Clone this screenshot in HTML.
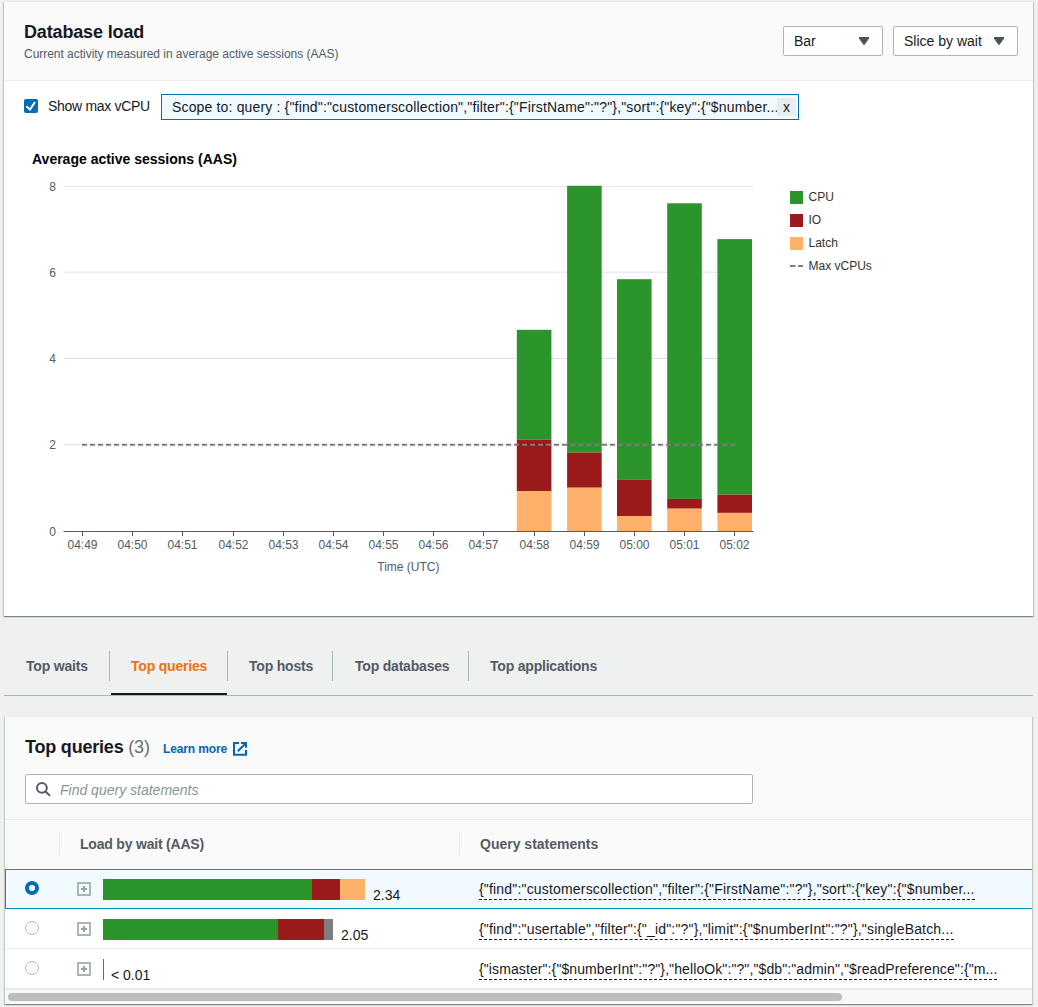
<!DOCTYPE html>
<html><head><meta charset="utf-8">
<style>
*{box-sizing:border-box;margin:0;padding:0}
html,body{width:1038px;height:1007px;overflow:hidden;background:#eff1f1;font-family:"Liberation Sans",sans-serif;color:#16191f;position:relative}
.a{position:absolute;white-space:nowrap}
#p1{position:absolute;left:4px;top:1px;width:1029px;height:615px;background:#fff;border-top:1px solid #eaeded;box-shadow:0 1px 1px 0 rgba(0,28,36,.3),1px 1px 1px 0 rgba(0,28,36,.15),-1px 1px 1px 0 rgba(0,28,36,.15)}
#p1h{position:absolute;left:4px;top:2px;width:1029px;height:79px;background:#fafafa;border-bottom:1px solid #eaeded}
.dd{position:absolute;top:26px;height:30px;background:#fff;border:1px solid #aab7b8;border-radius:2px;font-size:14px;color:#16191f}
.dd span{position:absolute;top:6px}
.tri{position:absolute;top:10px;width:10px;height:8px}
#cb{position:absolute;left:24px;top:99px;width:14px;height:14px;background:#006cb6;border-radius:2px}
#scope{position:absolute;left:161px;top:94px;width:638px;height:26px;background:#f1faff;border:1px solid #0073bb;font-size:14px}
#xbtn{position:absolute;left:615px;top:3px;width:19px;height:18px;background:#eaeded;font-size:14px;text-align:center;line-height:19px}
.tab{position:absolute;top:658px;letter-spacing:-0.2px;font-size:14px;font-weight:bold;color:#545b64}
.sep{position:absolute;top:651px;width:1px;height:30px;background:#aab7b8}
#tabline{position:absolute;left:4px;top:695px;width:1029px;height:1px;background:#aab7b8}
#tabul{position:absolute;left:111px;top:693px;width:116px;height:2px;background:#16191f}
#p2{position:absolute;left:5px;top:716px;width:1027px;height:288px;background:#fff;border-top:1px solid #eaeded;box-shadow:0 1px 1px 0 rgba(0,28,36,.3),1px 1px 1px 0 rgba(0,28,36,.15),-1px 1px 1px 0 rgba(0,28,36,.15)}
#p2h{position:absolute;left:0;top:0;width:1027px;height:103px;background:#fafafa;border-bottom:1px solid #eaeded}
#search{position:absolute;left:25px;top:774px;width:728px;height:30px;background:#fff;border:1px solid #aab7b8;border-radius:2px}
#thead{position:absolute;left:5px;top:820px;width:1027px;height:49px;background:#fafafa}
.hsep{position:absolute;top:832px;width:1px;height:23px;background:#eaeded}
.th{position:absolute;top:836px;letter-spacing:-0.2px;font-size:14px;font-weight:bold;color:#545b64}
.row{position:absolute;left:5px;width:1027px;height:40px;background:#fff;border-bottom:1px solid #eaeded}
.radio{position:absolute;left:25px;width:14px;height:14px;border-radius:50%;border:1px solid #aab7b8;background:#fff}
.exp{position:absolute;left:77px;width:14px;height:14px;border:2px solid #aab7b8}
.exp:before{content:"";position:absolute;left:2px;top:4px;width:6px;height:2px;background:#95a1a2}.exp:after{content:"";position:absolute;left:4px;top:2px;width:2px;height:6px;background:#95a1a2}
.q{position:absolute;left:479px;font-size:14px;color:#16191f;border-bottom:1px dashed #16191f;line-height:19px;letter-spacing:0.18px}
.val{position:absolute;font-size:14px;margin-top:1px;color:#16191f}
.seg{position:absolute;height:21px}
</style></head>
<body>
<div id="p1"></div>
<div id="p1h"></div>
<div id="t1" class="a" style="left:24px;top:22px;letter-spacing:-0.15px;font-size:18px;font-weight:bold;">Database load</div>
<div id="t2" class="a" style="left:24px;top:47px;letter-spacing:-0.03px;font-size:12px;color:#545b64">Current activity measured in average active sessions (AAS)</div>
<div class="dd" style="left:783px;width:100px"><span id="bar" style="left:10px">Bar</span><div class="tri" style="left:75px"><svg width="10" height="8" style="display:block"><path d="M0 0 H10 V1.6 L5.6 7.8 H4.4 L0 1.6 Z" fill="#4b535c"/></svg></div></div>
<div class="dd" style="left:893px;width:125px"><span id="slice" style="left:10px">Slice by wait</span><div class="tri" style="left:100px"><svg width="10" height="8" style="display:block"><path d="M0 0 H10 V1.6 L5.6 7.8 H4.4 L0 1.6 Z" fill="#4b535c"/></svg></div></div>

<div id="cb"><svg width="14" height="14" style="position:absolute;left:0;top:0"><path d="M2.3 7.3 L6 10.5 L11 3" stroke="#fff" stroke-width="2" fill="none"/></svg></div>
<div id="smv" class="a" style="left:48px;top:98px;font-size:14px;letter-spacing:-0.3px">Show max vCPU</div>
<div id="scope"><span id="scopetxt" class="a" style="left:10px;top:4px;letter-spacing:0.16px">Scope to: query : {"find":"customerscollection","filter":{"FirstName":"?"},"sort":{"key":{"$number...</span><div id="xbtn">x</div></div>

<svg width="1038" height="620" style="position:absolute;left:0;top:0">
<text id="ctitle" x="32" y="164" font-family="Liberation Sans" font-weight="bold" font-size="14" fill="#000">Average active sessions (AAS)</text>
<line x1="64" x2="753" y1="186.3" y2="186.3" stroke="#dde3ee" stroke-width="1"/>
<text x="56" y="190.6" text-anchor="end" font-family="Liberation Sans" font-size="12" fill="#545b64">8</text>
<line x1="64" x2="753" y1="272.2" y2="272.2" stroke="#dde3ee" stroke-width="1"/>
<text x="56" y="276.5" text-anchor="end" font-family="Liberation Sans" font-size="12" fill="#545b64">6</text>
<line x1="64" x2="753" y1="358.5" y2="358.5" stroke="#dde3ee" stroke-width="1"/>
<text x="56" y="362.8" text-anchor="end" font-family="Liberation Sans" font-size="12" fill="#545b64">4</text>
<line x1="64" x2="753" y1="444.75" y2="444.75" stroke="#dde3ee" stroke-width="1"/>
<text x="56" y="449.1" text-anchor="end" font-family="Liberation Sans" font-size="12" fill="#545b64">2</text>
<text x="56" y="535.6" text-anchor="end" font-family="Liberation Sans" font-size="12" fill="#545b64">0</text>
<rect x="516.8" y="329.8" width="34.6" height="109.9" fill="#2b942b"/>
<rect x="516.8" y="439.7" width="34.6" height="51.3" fill="#9b1b1c"/>
<rect x="516.8" y="491.0" width="34.6" height="40.3" fill="#ffb06b"/>
<rect x="567.1" y="185.8" width="34.6" height="266.7" fill="#2b942b"/>
<rect x="567.1" y="452.5" width="34.6" height="35.2" fill="#9b1b1c"/>
<rect x="567.1" y="487.7" width="34.6" height="43.6" fill="#ffb06b"/>
<rect x="617.0" y="279.2" width="34.6" height="200.2" fill="#2b942b"/>
<rect x="617.0" y="479.4" width="34.6" height="36.6" fill="#9b1b1c"/>
<rect x="617.0" y="516.0" width="34.6" height="15.3" fill="#ffb06b"/>
<rect x="667.2" y="203.3" width="34.6" height="295.6" fill="#2b942b"/>
<rect x="667.2" y="498.9" width="34.6" height="9.8" fill="#9b1b1c"/>
<rect x="667.2" y="508.7" width="34.6" height="22.6" fill="#ffb06b"/>
<rect x="717.4" y="239.1" width="34.6" height="255.5" fill="#2b942b"/>
<rect x="717.4" y="494.6" width="34.6" height="18.3" fill="#9b1b1c"/>
<rect x="717.4" y="512.9" width="34.6" height="18.4" fill="#ffb06b"/>
<line x1="82" x2="735" y1="444.8" y2="444.8" stroke="#7d7d7d" stroke-width="2" stroke-dasharray="5 3"/>
<line x1="63.5" x2="753.5" y1="531.5" y2="531.5" stroke="#545b64" stroke-width="1"/>
<line x1="82.5" x2="82.5" y1="531.5" y2="536" stroke="#545b64" stroke-width="1"/>
<text x="82.5" y="549.2" text-anchor="middle" font-family="Liberation Sans" font-size="12" fill="#545b64">04:49</text>
<line x1="132.5" x2="132.5" y1="531.5" y2="536" stroke="#545b64" stroke-width="1"/>
<text x="132.5" y="549.2" text-anchor="middle" font-family="Liberation Sans" font-size="12" fill="#545b64">04:50</text>
<line x1="182.5" x2="182.5" y1="531.5" y2="536" stroke="#545b64" stroke-width="1"/>
<text x="182.5" y="549.2" text-anchor="middle" font-family="Liberation Sans" font-size="12" fill="#545b64">04:51</text>
<line x1="233.5" x2="233.5" y1="531.5" y2="536" stroke="#545b64" stroke-width="1"/>
<text x="233.5" y="549.2" text-anchor="middle" font-family="Liberation Sans" font-size="12" fill="#545b64">04:52</text>
<line x1="283.5" x2="283.5" y1="531.5" y2="536" stroke="#545b64" stroke-width="1"/>
<text x="283.5" y="549.2" text-anchor="middle" font-family="Liberation Sans" font-size="12" fill="#545b64">04:53</text>
<line x1="333.5" x2="333.5" y1="531.5" y2="536" stroke="#545b64" stroke-width="1"/>
<text x="333.5" y="549.2" text-anchor="middle" font-family="Liberation Sans" font-size="12" fill="#545b64">04:54</text>
<line x1="383.5" x2="383.5" y1="531.5" y2="536" stroke="#545b64" stroke-width="1"/>
<text x="383.5" y="549.2" text-anchor="middle" font-family="Liberation Sans" font-size="12" fill="#545b64">04:55</text>
<line x1="433.5" x2="433.5" y1="531.5" y2="536" stroke="#545b64" stroke-width="1"/>
<text x="433.5" y="549.2" text-anchor="middle" font-family="Liberation Sans" font-size="12" fill="#545b64">04:56</text>
<line x1="483.5" x2="483.5" y1="531.5" y2="536" stroke="#545b64" stroke-width="1"/>
<text x="483.5" y="549.2" text-anchor="middle" font-family="Liberation Sans" font-size="12" fill="#545b64">04:57</text>
<line x1="534.5" x2="534.5" y1="531.5" y2="536" stroke="#545b64" stroke-width="1"/>
<text x="534.5" y="549.2" text-anchor="middle" font-family="Liberation Sans" font-size="12" fill="#545b64">04:58</text>
<line x1="584.5" x2="584.5" y1="531.5" y2="536" stroke="#545b64" stroke-width="1"/>
<text x="584.5" y="549.2" text-anchor="middle" font-family="Liberation Sans" font-size="12" fill="#545b64">04:59</text>
<line x1="634.5" x2="634.5" y1="531.5" y2="536" stroke="#545b64" stroke-width="1"/>
<text x="634.5" y="549.2" text-anchor="middle" font-family="Liberation Sans" font-size="12" fill="#545b64">05:00</text>
<line x1="684.5" x2="684.5" y1="531.5" y2="536" stroke="#545b64" stroke-width="1"/>
<text x="684.5" y="549.2" text-anchor="middle" font-family="Liberation Sans" font-size="12" fill="#545b64">05:01</text>
<line x1="734.5" x2="734.5" y1="531.5" y2="536" stroke="#545b64" stroke-width="1"/>
<text x="734.5" y="549.2" text-anchor="middle" font-family="Liberation Sans" font-size="12" fill="#545b64">05:02</text>
<text x="408.4" y="570.7" text-anchor="middle" font-family="Liberation Sans" font-size="12" fill="#545b64">Time (UTC)</text>
<rect x="790" y="191" width="13" height="13" fill="#2b942b"/>
<text x="808.5" y="201" font-family="Liberation Sans" font-size="12" fill="#333">CPU</text>
<rect x="790" y="214" width="13" height="13" fill="#9b1b1c"/>
<text x="808.5" y="224" font-family="Liberation Sans" font-size="12" fill="#333">IO</text>
<rect x="790" y="237" width="13" height="13" fill="#ffb06b"/>
<text x="808.5" y="247" font-family="Liberation Sans" font-size="12" fill="#333">Latch</text>
<line x1="790" x2="803" y1="266" y2="266" stroke="#7d7d7d" stroke-width="2" stroke-dasharray="5.5 2.5"/>
<text x="808.5" y="270" font-family="Liberation Sans" font-size="12" fill="#333">Max vCPUs</text>
</svg>

<div class="tab" id="tab1" style="left:26px">Top waits</div>
<div class="sep" style="left:109px"></div>
<div class="tab" id="tab2" style="left:131px;color:#ec7211">Top queries</div>
<div class="sep" style="left:227px"></div>
<div class="tab" id="tab3" style="left:249px">Top hosts</div>
<div class="sep" style="left:332px"></div>
<div class="tab" id="tab4" style="left:355px">Top databases</div>
<div class="sep" style="left:468px"></div>
<div class="tab" id="tab5" style="left:490px">Top applications</div>
<div id="tabline"></div>
<div id="tabul"></div>

<div id="p2"><div id="p2h"></div></div>
<div id="tq" class="a" style="left:25px;top:737px;font-size:18px;font-weight:bold;letter-spacing:-0.2px">Top queries <span style="font-weight:normal;color:#687078">(3)</span></div>
<div id="lm" class="a" style="left:163px;top:742px;font-size:12px;font-weight:bold;color:#0066b5;letter-spacing:-0.13px">Learn more</div>
<svg class="a" style="left:232px;top:741px" width="16" height="16"><path d="M7 2 H2 V13.8 H14 V9" stroke="#0066b5" stroke-width="2" fill="none"/><path d="M9 2 H14 V6.8" stroke="#0066b5" stroke-width="2" fill="none"/><path d="M13.5 2.5 L5.8 10.2" stroke="#0066b5" stroke-width="2" fill="none"/></svg>
<div id="search"><svg class="a" style="left:10px;top:6px" width="16" height="16"><circle cx="5.9" cy="6.8" r="4.9" stroke="#545b64" stroke-width="2" fill="none"/><path d="M9.3 10.2 L14 14.9" stroke="#545b64" stroke-width="2"/></svg><span id="ph" class="a" style="left:34px;top:7px;font-size:14px;font-style:italic;color:#879596">Find query statements</span></div>

<div id="thead"></div>
<div class="hsep" style="left:59px"></div>
<div class="hsep" style="left:459px"></div>
<div class="th" id="th1" style="left:80px">Load by wait (AAS)</div>
<div class="th" id="th2" style="left:480px;letter-spacing:0">Query statements</div>

<div class="row" style="top:869px;background:#f1faff;border:1px solid #0096c3;border-right:none;height:40px"></div>
<div class="radio" style="top:881px;border:4px solid #006cb6"></div>
<div class="exp" style="top:882px"></div>
<div class="seg" style="left:103px;top:879px;width:209px;background:#2b942b"></div>
<div class="seg" style="left:312px;top:879px;width:28px;background:#9b1b1c"></div>
<div class="seg" style="left:340px;top:879px;width:25px;background:#ffb06b"></div>
<div class="val" id="v1" style="left:373px;top:886px">2.34</div>
<div class="q" id="q1" style="top:880px">{"find":"customerscollection","filter":{"FirstName":"?"},"sort":{"key":{"$number...</div>

<div class="row" style="top:909px"></div>
<div class="radio" style="top:921px"></div>
<div class="exp" style="top:922px"></div>
<div class="seg" style="left:103px;top:919px;width:175px;background:#2b942b"></div>
<div class="seg" style="left:278px;top:919px;width:46px;background:#9b1b1c"></div>
<div class="seg" style="left:324px;top:919px;width:9px;background:#7d7d7d"></div>
<div class="val" id="v2" style="left:341px;top:926px">2.05</div>
<div class="q" id="q2" style="top:920px">{"find":"usertable","filter":{"_id":"?"},"limit":{"$numberInt":"?"},"singleBatch...</div>

<div class="row" style="top:949px"></div>
<div class="radio" style="top:961px"></div>
<div class="exp" style="top:962px"></div>
<div class="seg" style="left:103px;top:959px;width:1px;background:#2b942b"></div>
<div class="val" id="v3" style="left:111px;top:966px">&lt; 0.01</div>
<div class="q" id="q3" style="top:960px;letter-spacing:0.1px">{"ismaster":{"$numberInt":"?"},"helloOk":"?","$db":"admin","$readPreference":{"m...</div>

<div id="sbar" style="position:absolute;left:5px;top:989px;width:1027px;height:14px;background:#f7f7f7;border-top:1px solid #e6e8e8"></div>
<div id="thumb" style="position:absolute;left:8px;top:993px;width:834px;height:8px;background:#bdbdbd;border-radius:4px"></div>
</body></html>
